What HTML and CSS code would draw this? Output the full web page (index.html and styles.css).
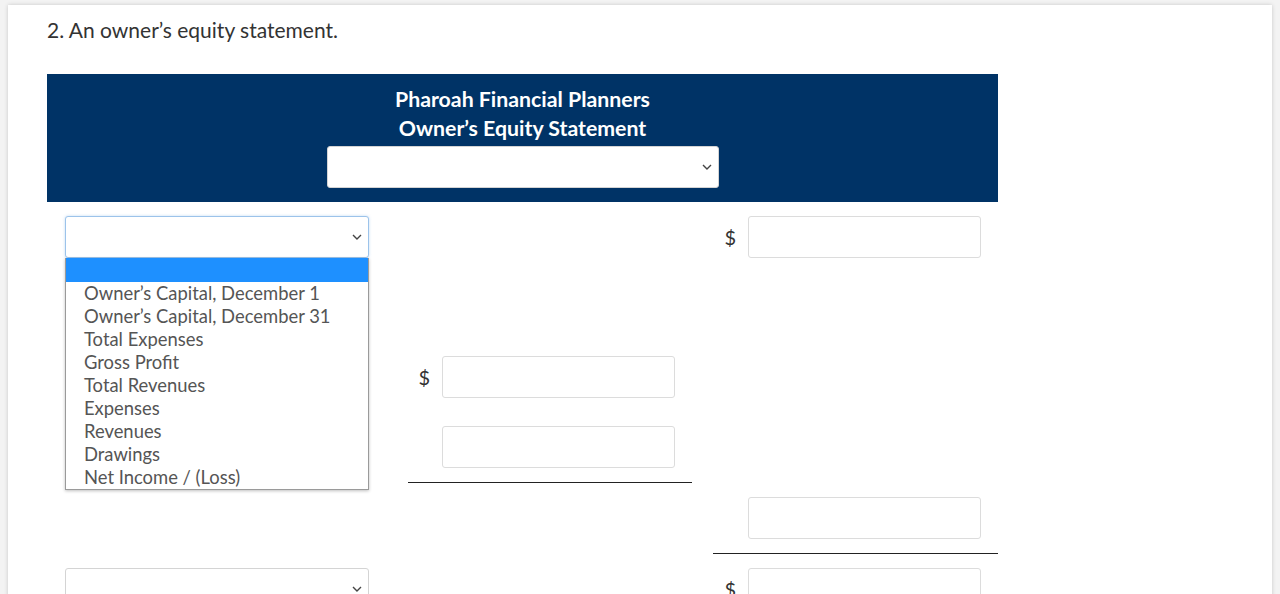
FILE: index.html
```html
<!DOCTYPE html>
<html lang="en">
<head>
<meta charset="utf-8">
<title>Owner's Equity Statement</title>
<link rel="stylesheet" href="styles.css">
</head>
<body>
<div class="card">
  <h2 class="question">2. An owner’s equity statement.</h2>
  <div class="statement">
    <div class="header">
      <div class="title">Pharoah Financial Planners</div>
      <div class="title">Owner’s Equity Statement</div>
      <div class="select-wrap header-select">
        <select class="sel"><option></option></select>
        <svg class="chev" viewBox="0 0 10 6" width="10" height="6"><path d="M1 1 L5 5 L9 1" fill="none" stroke="#444" stroke-width="1.4"/></svg>
      </div>
    </div>

    <div class="grid">
      <!-- row 1 -->
      <div class="cell label">
        <div class="select-wrap focused">
          <select class="sel"><option></option></select>
          <svg class="chev" viewBox="0 0 10 6" width="10" height="6"><path d="M1 1 L5 5 L9 1" fill="none" stroke="#444" stroke-width="1.4"/></svg>
          <ul class="dropdown">
            <li class="active">&nbsp;</li>
            <li>Owner’s Capital, December 1</li>
            <li>Owner’s Capital, December 31</li>
            <li>Total Expenses</li>
            <li>Gross Profit</li>
            <li>Total Revenues</li>
            <li>Expenses</li>
            <li>Revenues</li>
            <li>Drawings</li>
            <li>Net Income / (Loss)</li>
          </ul>
        </div>
      </div>
      <div class="cell"></div>
      <div class="cell amt"><span class="dollar">$</span><input class="inp" type="text"></div>

      <!-- row 2 -->
      <div class="cell label">
        <div class="select-wrap">
          <select class="sel"><option></option></select>
          <svg class="chev" viewBox="0 0 10 6" width="10" height="6"><path d="M1 1 L5 5 L9 1" fill="none" stroke="#444" stroke-width="1.4"/></svg>
        </div>
      </div>
      <div class="cell"></div>
      <div class="cell"></div>

      <!-- row 3 -->
      <div class="cell label">
        <div class="select-wrap">
          <select class="sel"><option></option></select>
          <svg class="chev" viewBox="0 0 10 6" width="10" height="6"><path d="M1 1 L5 5 L9 1" fill="none" stroke="#444" stroke-width="1.4"/></svg>
        </div>
      </div>
      <div class="cell amt"><span class="dollar">$</span><input class="inp" type="text"></div>
      <div class="cell"></div>

      <!-- row 4 -->
      <div class="cell label">
        <div class="select-wrap">
          <select class="sel"><option></option></select>
          <svg class="chev" viewBox="0 0 10 6" width="10" height="6"><path d="M1 1 L5 5 L9 1" fill="none" stroke="#444" stroke-width="1.4"/></svg>
        </div>
      </div>
      <div class="cell amt underline"><input class="inp" type="text"></div>
      <div class="cell"></div>

      <!-- row 5 -->
      <div class="cell label"></div>
      <div class="cell"></div>
      <div class="cell amt underline"><input class="inp" type="text"></div>

      <!-- row 6 -->
      <div class="cell label">
        <div class="select-wrap">
          <select class="sel"><option></option></select>
          <svg class="chev" viewBox="0 0 10 6" width="10" height="6"><path d="M1 1 L5 5 L9 1" fill="none" stroke="#444" stroke-width="1.4"/></svg>
        </div>
      </div>
      <div class="cell"></div>
      <div class="cell amt"><span class="dollar">$</span><input class="inp" type="text"></div>
    </div>
  </div>
</div>
</body>
</html>
```

FILE: styles.css
```css
* { box-sizing: border-box; }

html, body {
  margin: 0;
  padding: 0;
  background: #f3f3f3;
  font-family: Lato, "Open Sans", sans-serif;
  color: #333;
  overflow: hidden;
}

.card {
  margin: 5px 8px 0 8px;
  background: #fff;
  min-height: 700px;
  padding: 13px 0 0 39px;
  box-shadow: 0 0 4px rgba(0, 0, 0, 0.18);
}

.question {
  margin: 0;
  font-size: 21px;
  line-height: 24px;
  font-weight: 400;
  color: #333;
}

.statement {
  width: 951px;
  margin-top: 32px;
}

.header {
  background: #003366;
  padding: 11px 0 14px;
  display: flex;
  flex-direction: column;
  align-items: center;
}

.title {
  color: #fff;
  font-weight: 700;
  font-size: 21.3px;
  line-height: 29px;
}

.header-select {
  margin-top: 3px;
}

.select-wrap {
  position: relative;
  width: 304px;
  height: 42px;
}

.header-select.select-wrap { width: 392px; }

.sel {
  -webkit-appearance: none;
  appearance: none;
  width: 100%;
  height: 42px;
  border: 1px solid #d4d4d4;
  border-radius: 3px;
  background: #fff;
  margin: 0;
  font-family: Lato, sans-serif;
  font-size: 18px;
}

.focused .sel {
  border-color: #9cc3ea;
  box-shadow: 0 0 3px rgba(80, 150, 220, 0.35);
}

.chev {
  position: absolute;
  right: 7px;
  top: 18px;
  pointer-events: none;
}

.dropdown {
  position: absolute;
  top: 42px;
  left: 0;
  width: 304px;
  margin: 0;
  padding: 0;
  list-style: none;
  background: #fff;
  border: 1px solid #9a9a9a;
  border-top: none;
  box-shadow: 0 1px 3px rgba(0, 0, 0, 0.25);
  z-index: 10;
}

.dropdown li {
  height: 23px;
  line-height: 23px;
  font-size: 18.4px;
  color: #555;
  padding-left: 18px;
  white-space: nowrap;
}

.dropdown li.active {
  background: #1e90ff;
  height: 24px;
}

.grid {
  display: grid;
  grid-template-columns: 340px 284px 285px;
  column-gap: 21px;
}

.cell {
  padding: 14px 0;
  min-height: 70px;
}

.cell.label {
  padding-left: 18px;
}

.cell.amt {
  display: flex;
  align-items: center;
  justify-content: flex-end;
  padding-right: 17px;
}

.cell.underline {
  border-bottom: 1px solid #222;
}

.dollar {
  font-size: 20px;
  color: #333;
  margin-right: 12px;
}

.inp {
  width: 233px;
  height: 42px;
  border: 1px solid #dcdcdc;
  border-radius: 3px;
  margin: 0;
  background: #fff;
}
```
